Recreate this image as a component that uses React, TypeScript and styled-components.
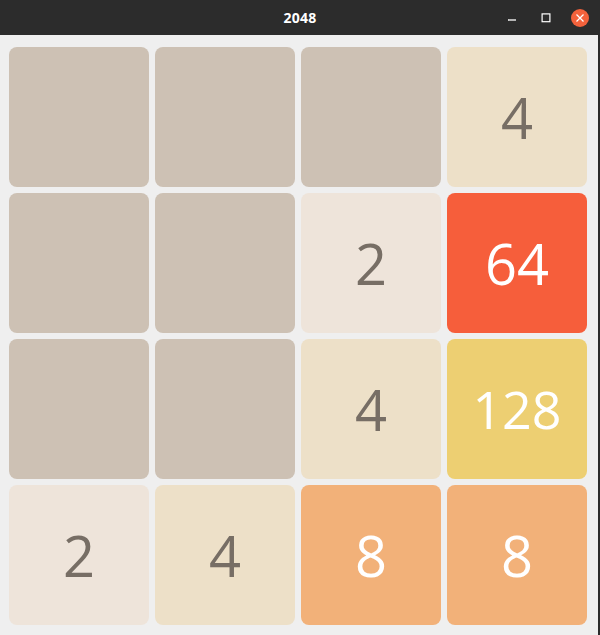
import React from "react";
import styled, { createGlobalStyle } from "styled-components";

const board: number[][] = [
  [0, 0, 0, 4],
  [0, 0, 2, 64],
  [0, 0, 4, 128],
  [2, 4, 8, 8],
];

const tileColors: Record<number, { bg: string; fg: string }> = {
  0: { bg: "#cdc1b4", fg: "#776e65" },
  2: { bg: "#eee4da", fg: "#776e65" },
  4: { bg: "#ede0c8", fg: "#776e65" },
  8: { bg: "#f2b179", fg: "#ffffff" },
  16: { bg: "#f59563", fg: "#ffffff" },
  32: { bg: "#f67c5f", fg: "#ffffff" },
  64: { bg: "#f65e3b", fg: "#ffffff" },
  128: { bg: "#edcf72", fg: "#ffffff" },
};

const App = () => {
  return (
    <Window>
      <GlobalStyle />
      <TitleBar>
        <Title>2048</Title>
        <Controls>
          <ControlButton aria-label="minimize">
            <svg width="10" height="10" viewBox="0 0 10 10">
              <line x1="1" y1="7" x2="9" y2="7" stroke="#fff" strokeWidth="1.3" />
            </svg>
          </ControlButton>
          <ControlButton aria-label="maximize">
            <svg width="10" height="10" viewBox="0 0 10 10">
              <rect x="1.1" y="0.9" width="7.8" height="7.8" fill="none" stroke="#fff" strokeWidth="1.2" />
            </svg>
          </ControlButton>
          <CloseButton aria-label="close">
            <svg width="10" height="10" viewBox="0 0 10 10">
              <path d="M1.5 1.5 L8.5 8.5 M8.5 1.5 L1.5 8.5" stroke="#fff" strokeWidth="1.3" />
            </svg>
          </CloseButton>
        </Controls>
      </TitleBar>
      <Content>
        <Grid>
          {board.flat().map((v, i) => (
            <Tile key={i} $value={v}>
              {v > 0 ? v : ""}
            </Tile>
          ))}
        </Grid>
      </Content>
    </Window>
  );
};

export default App;

const GlobalStyle = createGlobalStyle`
  html, body {
    margin: 0;
    padding: 0;
    background: #2b2b2b;
  }
`;

const Window = styled.div`
  width: 600px;
  height: 635px;
  display: flex;
  flex-direction: column;
  background-color: #2b2b2b;
  overflow: hidden;
`;

const TitleBar = styled.div`
  height: 35px;
  flex-shrink: 0;
  position: relative;
  display: flex;
  align-items: center;
  justify-content: center;
  background-color: #2c2c2c;
`;

const Title = styled.div`
  font-family: "Noto Sans", "DejaVu Sans", sans-serif;
  font-weight: 700;
  font-size: 14px;
  color: #ffffff;
  letter-spacing: 0.2px;
`;

const Controls = styled.div`
  position: absolute;
  right: 11px;
  top: 0;
  height: 35px;
  display: flex;
  align-items: center;
  gap: 16px;
`;

const ControlButton = styled.div`
  width: 18px;
  height: 18px;
  display: flex;
  align-items: center;
  justify-content: center;
`;

const CloseButton = styled(ControlButton)`
  border-radius: 50%;
  background-color: #f3623c;
`;

const Content = styled.div`
  flex: 1;
  width: 598px;
  box-sizing: border-box;
  padding: 12px 11px 10px 9px;
  background-color: #efefef;
`;

const Grid = styled.div`
  display: grid;
  grid-template-columns: repeat(4, 140px);
  grid-auto-rows: 140px;
  gap: 6px;
`;

const Tile = styled.div<{ $value: number }>`
  display: flex;
  align-items: center;
  justify-content: center;
  border-radius: 8px;
  background-color: ${(p) => (tileColors[p.$value] || tileColors[128]).bg};
  color: ${(p) => (tileColors[p.$value] || tileColors[128]).fg};
  font-family: "Open Sans", "Noto Sans", sans-serif;
  font-size: ${(p) => (p.$value >= 100 ? "52px" : "56px")};
  line-height: 1;
`;
